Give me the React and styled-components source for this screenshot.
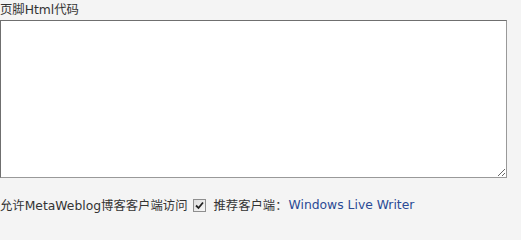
import React from "react";
import styled, { createGlobalStyle } from "styled-components";

const Global = createGlobalStyle`
  html, body { margin: 0; padding: 0; background: #f4f4f4; }
  body { font-family: "DejaVu Sans", "Noto Sans CJK SC", sans-serif; font-size: 12.35px; color: #333; }
`;

const Page = styled.div`
  display: flex;
  flex-direction: column;
  padding: 2px 0 0 0;
`;

const Label = styled.div`
  line-height: 16px;
  height: 16px;
  margin-bottom: 2px;
`;

const Area = styled.textarea`
  box-sizing: border-box;
  width: 507px;
  height: 158px;
  margin: 0;
  border: 1px solid #6f6f6f;
  border-right-color: #999;
  border-bottom-color: #999;
  background: #fff;
  resize: both;
`;

const Row = styled.div`
  display: flex;
  align-items: center;
  margin-top: 19px;
  height: 16px;
  white-space: nowrap;
`;

const Check = styled.span`
  display: inline-flex;
  align-items: center;
  justify-content: center;
  box-sizing: border-box;
  width: 13px;
  height: 13px;
  margin: 0 7px 0 6px;
  border: 1px solid #8e8e8e;
  background: linear-gradient(135deg, #dcdcdc, #f8f8f8);
`;

const Link = styled.a`
  color: #2b4a94;
  text-decoration: none;
  margin-left: 1px;
`;

export default function App() {
  return (
    <>
      <Global />
      <Page>
        <Label>页脚Html代码</Label>
        <Area />
        <Row>
          允许MetaWeblog博客客户端访问
          <Check role="checkbox" aria-checked="true">
            <svg width="9" height="9" viewBox="0 0 9 9">
              <path d="M1 4.5 L3.5 7 L8 1.5" fill="none" stroke="#222" strokeWidth="1.8" />
            </svg>
          </Check>
          推荐客户端：<Link href="#">Windows Live Writer</Link>
        </Row>
      </Page>
    </>
  );
}
